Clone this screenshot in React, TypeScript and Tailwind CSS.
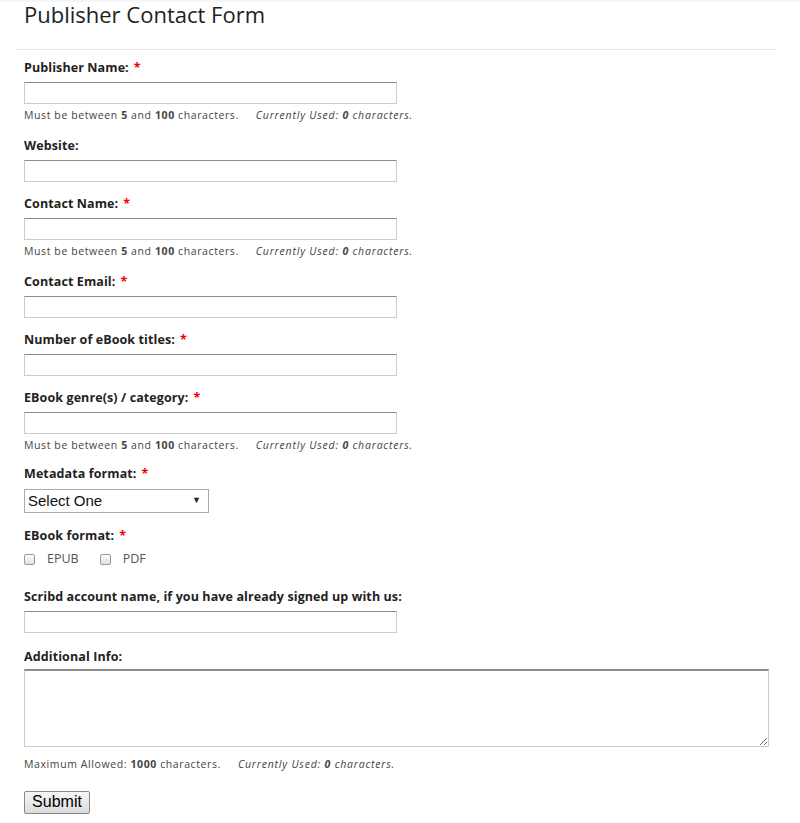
import React from "react";

const Req = () => <span className="text-[#e00] font-bold ml-[5px]">*</span>;

const Label = ({ children, req }: { children: React.ReactNode; req?: boolean }) => (
  <div className="text-[12.5px] font-bold text-[#222] leading-[16px] tracking-[0.1px]">
    {children}
    {req && <Req />}
  </div>
);

const Input = () => (
  <input
    type="text"
    className="w-[373px] h-[22px] mt-[6px] block border border-[#ccc] border-t-[#8c8c8c] bg-white outline-none"
  />
);

const Help = () => (
  <div className="text-[10.5px] text-[#444] mt-[5px] leading-[12px] tracking-[0.6px] whitespace-nowrap">
    Must be between <b>5</b> and <b>100</b> characters.
    <span className="italic ml-[17px] tracking-[0.8px]">
      Currently Used: <b>0</b> characters.
    </span>
  </div>
);

export default function App() {
  return (
    <div className="bg-white min-h-[823px] w-[800px]" style={{ fontFamily: '"Open Sans", sans-serif' }}>
      <div className="h-[2px] bg-[#f4f6fa]" />
      <div className="px-[24px] text-[22px] text-[#222] leading-[24px]">Publisher Contact Form</div>
      <div className="ml-[16px] mr-[25px] mt-[23px] border-t border-dotted border-[#ccc]" />
      <div className="px-[24px] pt-[10px]">
        <Label req>Publisher Name:</Label>
        <Input />
        <Help />

        <div className="mt-[17px]">
          <Label>Website:</Label>
          <Input />
        </div>

        <div className="mt-[14px]">
          <Label req>Contact Name:</Label>
          <Input />
          <Help />
        </div>

        <div className="mt-[17px]">
          <Label req>Contact Email:</Label>
          <Input />
        </div>

        <div className="mt-[14px]">
          <Label req>Number of eBook titles:</Label>
          <Input />
        </div>

        <div className="mt-[14px]">
          <Label req>EBook genre(s) / category:</Label>
          <Input />
          <Help />
        </div>

        <div className="mt-[15px]">
          <Label req>Metadata format:</Label>
          <div
            className="mt-[7px] w-[185px] h-[24px] border border-[#aaa] bg-white flex items-center justify-between pl-[3px] pr-[7px]"
            style={{ fontFamily: '"Liberation Sans", Arial, sans-serif' }}
          >
            <span className="text-[15px] text-[#111]">Select One</span>
            <span className="text-[9px] text-[#222]">▼</span>
          </div>
        </div>

        <div className="mt-[15px]">
          <Label req>EBook format:</Label>
          <div className="flex items-center mt-[7px] text-[12.5px] text-[#555] h-[16px]">
            <span className="inline-block w-[11px] h-[11px] border border-[#999] rounded-[2px] bg-gradient-to-b from-[#fff] to-[#e0e0e0]" />
            <span className="ml-[12px]">EPUB</span>
            <span className="ml-[21px] inline-block w-[11px] h-[11px] border border-[#999] rounded-[2px] bg-gradient-to-b from-[#fff] to-[#e0e0e0]" />
            <span className="ml-[12px]">PDF</span>
          </div>
        </div>

        <div className="mt-[22px]">
          <Label>Scribd account name, if you have already signed up with us:</Label>
          <Input />
        </div>

        <div className="mt-[16px]">
          <Label>Additional Info:</Label>
          <textarea className="block mt-[4px] w-[745px] h-[78px] border border-[#ccc] border-t-2 border-t-[#8c8c8c] bg-white outline-none resize" />
          <div className="text-[10.5px] text-[#444] mt-[11px] leading-[12px] tracking-[0.6px] whitespace-nowrap">
            Maximum Allowed: <b>1000</b> characters.
            <span className="italic ml-[17px] tracking-[0.8px]">
              Currently Used: <b>0</b> characters.
            </span>
          </div>
        </div>

        <div className="mt-[19px]">
          <button
            className="h-[23px] w-[66px] border border-[#888] rounded-[2px] bg-gradient-to-b from-[#f6f6f6] to-[#dcdcdc] text-[16px] text-black leading-[20px]"
            style={{ fontFamily: '"Liberation Sans", Arial, sans-serif' }}
          >
            Submit
          </button>
        </div>
      </div>
    </div>
  );
}
